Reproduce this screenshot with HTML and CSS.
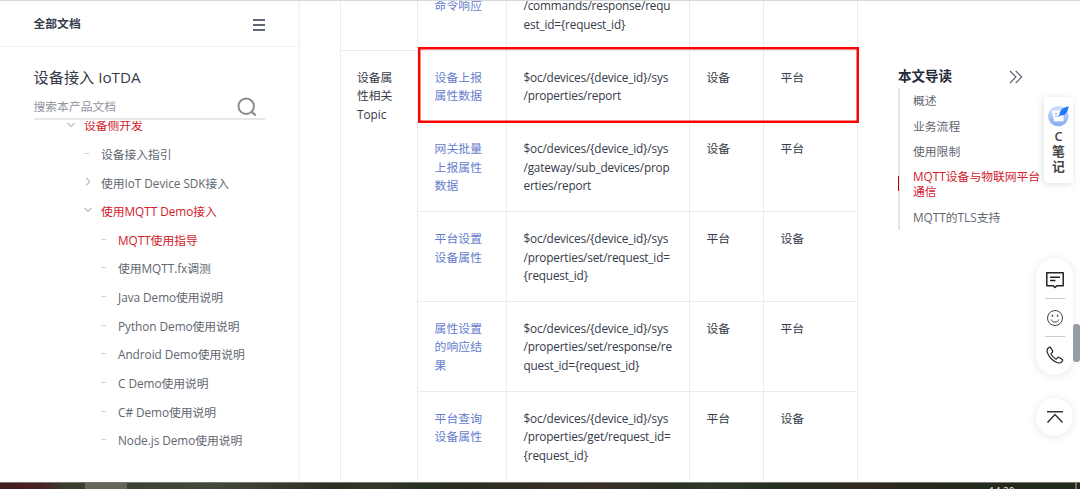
FILE: index.html
```html
<!DOCTYPE html>
<html lang="zh-CN">
<head>
<meta charset="utf-8">
<title>设备接入 IoTDA</title>
<link rel="stylesheet" href="styles.css">
</head>
<body>
<div class="page">
  <aside class="sidebar">
    <header class="side-head">
      <span class="all-docs">全部文档</span>
      <svg class="burger" width="12" height="12" viewBox="0 0 12 12"><path d="M0 1h12M0 6h12M0 11h12" stroke="#5f6779" stroke-width="1.8"/></svg>
    </header>
    <h1 class="product">设备接入 IoTDA</h1>
    <div class="search">
      <span>搜索本产品文档</span>
      <svg width="20" height="20" viewBox="0 0 20 20" fill="none" stroke="#8c8c8c" stroke-width="2"><circle cx="9.2" cy="9.2" r="7.7"/><path d="M14.6 14.6l4.1 3.9" stroke-width="2.3"/></svg>
    </div>
    <nav class="tree">
      <div class="node l1 on"><svg class="mark" viewBox="0 0 8 8"><path d="M.5 2l3.5 3.6L7.5 2"/></svg>设备侧开发</div>
      <div class="node l2"><i class="dash"></i>设备接入指引</div>
      <div class="node l2"><svg class="mark" viewBox="0 0 8 8"><path d="M2.3 0l3.4 3.7L2.3 7.4"/></svg>使用IoT Device SDK接入</div>
      <div class="node l2 on"><svg class="mark" viewBox="0 0 8 8"><path d="M.5 1l3.5 3.6L7.5 1"/></svg>使用MQTT Demo接入</div>
      <div class="node l3 on"><i class="dash"></i>MQTT使用指导</div>
      <div class="node l3"><i class="dash"></i>使用MQTT.fx调测</div>
      <div class="node l3"><i class="dash"></i>Java Demo使用说明</div>
      <div class="node l3"><i class="dash"></i>Python Demo使用说明</div>
      <div class="node l3"><i class="dash"></i>Android Demo使用说明</div>
      <div class="node l3"><i class="dash"></i>C Demo使用说明</div>
      <div class="node l3"><i class="dash"></i>C# Demo使用说明</div>
      <div class="node l3"><i class="dash"></i>Node.js Demo使用说明</div>
    </nav>
  </aside>

  <main class="content">
    <div class="topics">
      <div class="cell prev"></div>
      <div class="cell prev link">命令响应<br>&nbsp;</div>
      <div class="cell prev path">/commands/response/requ<br>est_id={request_id}</div>
      <div class="cell prev"></div>
      <div class="cell prev"></div>

      <div class="cell group">设备属<br>性相关<br>Topic</div>
      <div class="cell link">设备上报<br>属性数据</div>
      <div class="cell path">$oc/devices/{device_id}/sys<br>/properties/report</div>
      <div class="cell">设备</div>
      <div class="cell">平台</div>

      <div class="cell link">网关批量<br>上报属性<br>数据</div>
      <div class="cell path">$oc/devices/{device_id}/sys<br>/gateway/sub_devices/prop<br>erties/report</div>
      <div class="cell">设备</div>
      <div class="cell">平台</div>

      <div class="cell link">平台设置<br>设备属性</div>
      <div class="cell path">$oc/devices/{device_id}/sys<br>/properties/set/request_id=<br>{request_id}</div>
      <div class="cell">平台</div>
      <div class="cell">设备</div>

      <div class="cell link">属性设置<br>的响应结<br>果</div>
      <div class="cell path">$oc/devices/{device_id}/sys<br>/properties/set/response/re<br>quest_id={request_id}</div>
      <div class="cell">设备</div>
      <div class="cell">平台</div>

      <div class="cell link">平台查询<br>设备属性</div>
      <div class="cell path">$oc/devices/{device_id}/sys<br>/properties/get/request_id=<br>{request_id}</div>
      <div class="cell">平台</div>
      <div class="cell">设备</div>
    </div>
    <div class="highlight"></div>
  </main>

  <aside class="toc">
    <div class="toc-head">
      <b>本文导读</b>
      <svg width="14" height="14" viewBox="0 0 14 14" fill="none" stroke="#575d6c" stroke-width="1.1"><path d="M1 1l6 6-6 6M6.7 1l6 6-6 6"/></svg>
    </div>
    <ul class="toc-list">
      <li>概述</li>
      <li>业务流程</li>
      <li>使用限制</li>
      <li class="current">MQTT设备与物联网平台<br>通信</li>
      <li>MQTT的TLS支持</li>
    </ul>
  </aside>

  <div class="notes">
    <svg width="22" height="22" viewBox="0 0 22 22">
      <defs><linearGradient id="disc" x2="0" y2="1"><stop stop-color="#d6e2fd"/><stop offset="1" stop-color="#86aaf4"/></linearGradient>
      <linearGradient id="quill" x2="1" y2="1"><stop stop-color="#2b8cff"/><stop offset="1" stop-color="#1565ee"/></linearGradient></defs>
      <circle cx="10.3" cy="11" r="10.3" fill="url(#disc)"/>
      <path d="M3.7 5.5h9.8l2 2v8.8H6.2z" fill="#fff"/>
      <path d="M6.3 8.7h3.2M6.7 11.2h3" stroke="#8db4fa"/>
      <path d="M20.8 1.5c-4.9.4-8.7 2.5-9.4 7.9l-1.6 2.6 2.9-1.6c5.1.3 7-3.8 8.1-8.9z" fill="url(#quill)"/>
    </svg>
    <b class="c">C</b><b>笔</b><b>记</b>
  </div>

  <div class="tools">
    <svg width="20" height="18" viewBox="0 0 20 18" fill="none" stroke="#222" stroke-width="1.5"><path d="M1.8 1.7h16.4v13h-6.1L10 16.4l-1.9-1.7H1.8z" stroke-linejoin="round"/><path d="M5 6.3h10M5 9.5h5.5"/></svg>
    <hr>
    <svg width="18" height="18" viewBox="0 0 18 18" fill="none" stroke="#444"><circle cx="9" cy="9" r="7.5"/><path d="M5 10.5c1.4 3.5 6.6 3.5 8 0"/><path d="M6.4 5.7v2M11.6 5.7v2" stroke-width="1.4"/></svg>
    <hr>
    <svg width="18" height="18" viewBox="0 0 18 18" fill="none" stroke="#222" stroke-width="1.2"><path d="M3 1.4C.7 2.7.6 5.2 2 8c1.6 3.3 4.3 6.2 7.8 8 2.7 1.4 5.3 1.3 6.6-1 .4-.7.3-1.3-.3-1.7l-2.9-1.9c-.7-.4-1.3-.3-1.7.3l-.7 1c-.4.5-.9.5-1.4.1C7.6 11.6 6.3 10.2 5.2 8.5c-.4-.6-.3-1 .1-1.4l.9-.6c.6-.5.7-1 .3-1.7L4.8 1.9c-.4-.7-1-.9-1.8-.5z"/></svg>
  </div>

  <div class="totop">
    <svg width="18" height="14" viewBox="0 0 18 14" fill="none" stroke="#333" stroke-width="1.5"><path d="M1 1.7h16M1.5 12.5L9 4.5l7.5 8"/></svg>
  </div>
  <div class="scrollbar"></div>
</div>
<footer class="taskbar"><span class="task"></span><span class="clock">14:20</span><span class="peek"></span></footer>
</body>
</html>
```
FILE: styles.css
```css
* { box-sizing: border-box; }
body {
  margin: 0;
  width: 1080px;
  height: 489px;
  overflow: hidden;
  background: #fff;
  color: #353b49;
  font: 11.8px "Open Sans", "Noto Sans CJK SC", sans-serif;
}
svg { display: block; flex: none; }
.page {
  position: relative;
  display: flex;
  height: 482px;
  overflow: hidden;
  border-top: 1px solid #d8d8d8;
}

.sidebar {
  width: 300px;
  flex: none;
  border-right: 2px solid #f5f5f6;
  display: flex;
  flex-direction: column;
}
.side-head {
  height: 46px;
  flex: none;
  display: flex;
  align-items: center;
  justify-content: space-between;
  padding: 0 33px 0 33.5px;
  border-bottom: 1px solid #f0f0f1;
}
.all-docs { font-weight: 700; font-family: "Noto Sans CJK SC", sans-serif; margin-top: -2px; }
.burger { margin-top: 2px; }
.product {
  margin: 18px 0 0 33.5px;
  font-size: 15.2px;
  line-height: 24px;
  font-weight: 400;
}
.search {
  margin: 3px 33px 0 33.5px;
  height: 28px;
  flex: none;
  display: flex;
  align-items: center;
  justify-content: space-between;
  padding: 0 8px 0 0;
  border-bottom: 2px solid #e5e7ea;
  color: #8f939d;
}
.search svg { margin-top: 3px; }
.tree { margin-top: 1px; overflow: hidden; height: 361px; }
.node {
  display: flex;
  align-items: center;
  height: 28.65px;
  color: #61666f;
  white-space: nowrap;
  letter-spacing: -.04px;
}
.node:first-child { margin-top: -10.6px; }
.on { color: #d0202b; }
.mark {
  width: 8px;
  height: 8px;
  margin-right: 9px;
  fill: none;
  stroke: #8a8e99;
}
.dash { width: 5px; height: 1px; margin-right: 12px; background: #d3d5d9; }
.l1 { padding-left: 67px; }
.l2 { padding-left: 84px; }
.l3 { padding-left: 101px; }

.content { position: relative; margin-left: 39.5px; width: 518px; flex: none; }
.topics {
  display: grid;
  grid-template-columns: 76.5px 89px 183px 74px 93.5px;
  grid-template-rows: 49px 71.3px 89.8px 89.8px 89.8px 89.8px;
  border-left: 1px solid #ededf0;
  border-right: 1px solid #ededf0;
}
.cell {
  padding: 16.9px 16.5px 0;
  line-height: 18.6px;
  border-top: 1px solid #ebebef;
  border-left: 1px solid #ebebef;
  white-space: nowrap;
}
.cell.prev {
  display: flex;
  align-items: flex-end;
  padding: 0 16.5px 16.5px;
  border-top: 0;
}
.cell.path { letter-spacing: -.18px; }
.group { grid-row: span 5; }
.group, .prev:first-child { border-left: 0; }
.link { color: #657ccc; letter-spacing: .1px; }
.highlight {
  position: absolute;
  left: 78px;
  top: 46px;
  width: 441.5px;
  height: 76px;
  border: 2px solid #f80606;
  box-shadow: inset 0 0 0 .5px #f80606;
}

.toc { margin-left: 40.5px; width: 146px; padding-top: 65px; flex: none; }
.toc-head {
  display: flex;
  align-items: center;
  justify-content: space-between;
  height: 22px;
  padding-right: 21px;
  font-size: 13.5px;
  color: #252b3a;
}
.toc-head b { margin-top: -5px; }
.toc-list {
  list-style: none;
  margin: 0;
  padding: 5.4px 0 0;
  height: 142px;
  border-left: 2px solid #e4e5ec;
  color: #61666f;
  line-height: 15px;
}
.toc-list li { padding-left: 13px; margin-bottom: 10.3px; white-space: nowrap; }
.toc-list .current {
  color: #d0202b;
  margin-left: -2px;
  padding-left: 15px;
  background: linear-gradient(#c7000b, #c7000b) 0 7px / 1px 15px no-repeat;
}

.notes {
  position: absolute;
  left: 1044px;
  top: 96px;
  width: 29px;
  height: 86px;
  padding-top: 8px;
  display: flex;
  flex-direction: column;
  align-items: center;
  border-radius: 4px 0 0 4px;
  background: #fff;
  box-shadow: -1px 1px 7px rgba(0, 0, 0, .13);
  color: #444;
  font-size: 12.8px;
  line-height: 15.5px;
}
.notes .c { font-weight: 600; margin-top: 2px; line-height: 14.5px; }
.tools, .totop {
  position: absolute;
  left: 1036px;
  width: 37px;
  background: #fff;
  box-shadow: 0 1px 8px rgba(0, 0, 0, .1);
  display: flex;
  align-items: center;
}
.tools {
  top: 257px;
  height: 117px;
  border-radius: 19px;
  flex-direction: column;
  justify-content: space-between;
  padding: 13px 0 11px;
}
.tools hr { width: 20px; height: 1px; margin: 0; border: 0; background: #ccc; }
.totop { top: 397px; height: 38px; border-radius: 50%; justify-content: center; }
.scrollbar {
  position: absolute;
  left: 1073px;
  top: 323px;
  width: 7px;
  height: 38px;
  border-radius: 3px;
  background: #969ba5;
}

.taskbar {
  height: 7px;
  display: flex;
  overflow: hidden;
  border-top: 1px solid #777970;
  background: linear-gradient(90deg, #421c20 0, #4b2022 40px, #3a3d2c 66px, #3c4230 130px, #424a3b 215px, #2d2d20 335px, #343828 375px, #263022 430px, #2d2c20 480px, #3a3026 600px, #293022 670px, #303628 710px, #263022 770px, #33291f 875px, #26291e 905px, #202a1b 1080px);
}
.task { width: 42px; margin-left: 85px; background: #646658; }
.clock { margin-left: 862px; width: 86px; color: #e8e8e8; font-size: 10px; line-height: 14px; margin-top: 1px; }
.peek { width: 2px; background: #6a7065; }
```
